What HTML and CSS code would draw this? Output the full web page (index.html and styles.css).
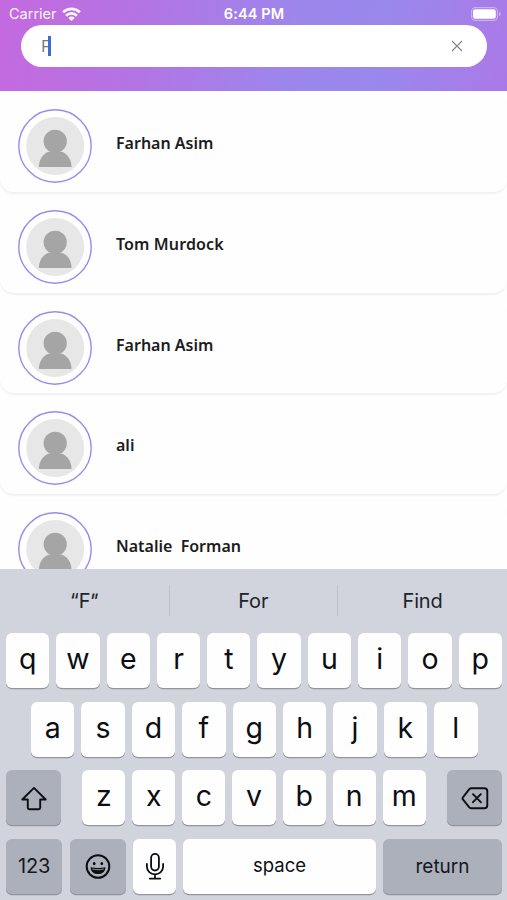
FILE: index.html
```html
<!DOCTYPE html>
<html lang="en">
<head>
<meta charset="utf-8">
<title>Search</title>
<link rel="stylesheet" href="styles.css">
</head>
<body>
<svg width="0" height="0" class="defs">
  <symbol id="person" viewBox="0 0 74 74">
    <circle cx="37" cy="37" r="36.200" fill="none" stroke="#998bed" stroke-width="1.400"/>
    <circle cx="37.200" cy="37" r="29" fill="#e7e7e7"/>
    <g fill="#a5a5a5"><circle cx="37.200" cy="32.300" r="11.600"/><path d="M20.900 58c0-7 3.500-13 9.500-15.300h13.600c6 2.300 9.500 8.300 9.500 15.300z"/></g>
  </symbol>
</svg>
<header class="header">
  <div class="status">
    <div class="carrier">Carrier
      <svg width="19" height="14" viewBox="0 0 19 14" fill="none" stroke="#fff" stroke-width="2.700"><path d="M1.100 5.300a12 12 0 0 1 16.800 0M4.100 8.700a7.600 7.600 0 0 1 10.800 0"/><path d="M9.500 14L6.300 10.900a4.500 4.500 0 0 1 6.400 0z" fill="#fff" stroke="none"/></svg>
    </div>
    <div class="time">6:44 PM</div>
    <svg class="battery" width="31" height="14" viewBox="0 0 31 14"><rect x=".6" y=".6" width="25.800" height="12.800" rx="3.800" fill="none" stroke="#fff" stroke-opacity=".4" stroke-width="1.100"/><rect x="2" y="2.200" width="22.800" height="9.600" rx="2.200" fill="#fff"/><path d="M28 4.800v4.400q1.600-.7 1.600-2.200t-1.600-2.200z" fill="#fff" fill-opacity=".45"/></svg>
  </div>
  <div class="search">
    <span class="query">F</span><span class="caret"></span>
    <svg class="clear" width="12" height="12" viewBox="0 0 12 12" stroke="#858585" stroke-width="1.100"><path d="M1 1l10 10M11 1L1 11"/></svg>
  </div>
</header>
<main class="list">
  <div class="card"><svg width="74" height="74"><use href="#person"/></svg><div class="name">Farhan Asim</div></div>
  <div class="card"><svg width="74" height="74"><use href="#person"/></svg><div class="name wide">Tom Murdock</div></div>
  <div class="card"><svg width="74" height="74"><use href="#person"/></svg><div class="name">Farhan Asim</div></div>
  <div class="card"><svg width="74" height="74"><use href="#person"/></svg><div class="name">ali</div></div>
  <div class="card"><svg width="74" height="74"><use href="#person"/></svg><div class="name">Natalie&nbsp; Forman</div></div>
</main>
<section class="keyboard">
  <div class="suggestions"><div>“F<span class="close-quote">"</span></div><div>For</div><div>Find</div></div>
  <div class="row"><b>q</b><b>w</b><b>e</b><b>r</b><b>t</b><b>y</b><b>u</b><b>i</b><b>o</b><b>p</b></div>
  <div class="row middle"><b>a</b><b>s</b><b>d</b><b>f</b><b>g</b><b>h</b><b>j</b><b>k</b><b>l</b></div>
  <div class="row lower">
    <div class="key dark"><svg width="28" height="26" viewBox="0 0 28 26" fill="none" stroke="#0c0e12" stroke-width="1.900" stroke-linejoin="round"><path d="M14 2.900L2.300 14.500h5.500v8.200q0 1.500 1.500 1.500h9.400q1.500 0 1.500-1.500v-8.200h5.500z"/></svg></div>
    <div class="letters"><b>z</b><b>x</b><b>c</b><b>v</b><b>b</b><b>n</b><b>m</b></div>
    <div class="key dark"><svg width="28" height="24" viewBox="0 0 28 24" fill="none" stroke="#0c0e12" stroke-width="1.900" stroke-linejoin="round" stroke-linecap="round"><path d="M10.500 2.300h12.800q3 0 3 3v14q0 3-3 3H10.500q-1.300 0-2.200-.9L2.100 13.700q-1.100-1.300 0-2.600L8.300 3.200q.9-.9 2.200-.9zM12 8.200l7.800 8M19.800 8.200l-7.800 8"/></svg></div>
  </div>
  <div class="row bottom">
    <div class="key dark numbers">123</div>
    <div class="key dark emoji"><svg width="26" height="26" viewBox="0 0 26 26"><circle cx="13" cy="13.500" r="11.300" fill="none" stroke="#0c0e12" stroke-width="2"/><ellipse cx="9.200" cy="10.600" rx="1.300" ry="1.700"/><ellipse cx="16.800" cy="10.600" rx="1.300" ry="1.700"/><path d="M5.500 14.200q7.500 1.400 15 0-.3 6.800-7.500 6.800t-7.500-6.800z" fill="#0c0e12"/><path d="M7 15.500q6 1 12 0l-.5 1.300q-5.500.9-11 0z" fill="#777c86"/></svg></div>
    <div class="key mic"><svg width="20" height="28" viewBox="0 0 20 28" fill="none" stroke="#0c0e12" stroke-width="1.800" stroke-linecap="round"><rect x="6.100" y="1.900" width="7.800" height="16.600" rx="3.900"/><path d="M1.900 12v2.800a8.100 7.600 0 0 0 16.200 0V12M10 22.500v4M4.800 26.600h10.400"/></svg></div>
    <div class="key space">space</div>
    <div class="key dark return">return</div>
  </div>
</section>
</body>
</html>
```

FILE: styles.css
```css
* { box-sizing: border-box; }
body {
  margin: 0;
  width: 507px;
  height: 900px;
  overflow: hidden;
  display: flex;
  flex-direction: column;
  background: #fefefe;
  font-family: Inter, "Liberation Sans", sans-serif;
  color: #0c0e12;
}
svg { display: block; flex: none; }
.defs { position: absolute; }
.header {
  flex: none;
  height: 91px;
  background: linear-gradient(100deg, #c569df 0%, #b573e3 25%, #9c86ec 58%, #9a88ed 74%, #aa79e8 100%);
}
.status {
  height: 25px;
  padding: 2px 5px 0 9px;
  display: grid;
  grid-template-columns: 1fr auto 1fr;
  align-items: center;
  color: #fff;
  font-size: 15px;
}
.carrier { display: flex; align-items: center; gap: 5px; opacity: .94; font-size: 14.500px; }
.time { padding-right: 3px; font-weight: 600; font-size: 14.500px; letter-spacing: .1px; }
.battery { justify-self: end; }
.search {
  height: 42px;
  margin: 0 20px 0 21px;
  padding: 0 24px 0 20px;
  border-radius: 21px;
  background: #fff;
  display: flex;
  align-items: center;
}
.query { width: 7px; font: 16px "Noto Sans", sans-serif; color: #777; }
.caret { width: 3px; height: 20px; background: #416bd4; }
.clear { margin-left: auto; }
.list { flex: none; height: 478px; overflow: hidden; }
.card {
  height: 92.750px;
  margin-top: 8px;
  padding: 10px 18px 0;
  display: flex;
  gap: 24px;
  border-radius: 14px;
  box-shadow: 0 2px 2px #f1f1f1;
}
.card:first-child { height: 100.750px; margin: 0; padding-top: 18px; }
.name { padding-top: 22px; font: 600 16px/24px "Noto Sans", sans-serif; color: #1c1c1c; }
.name.wide { letter-spacing: .12px; }
.keyboard { flex: 1; padding: 0 5px 0 6px; background: #d1d4dc; }
.suggestions {
  height: 64px;
  margin: 0 -5px 0 -6px;
  display: grid;
  grid-template-columns: 168.500px 168.500px 1fr;
  padding-top: 16px;
  font-size: 20px;
  line-height: 32px;
  letter-spacing: -.2px;
  text-align: center;
  color: #20242a;
}
.suggestions > div { height: 31px; }
.suggestions > div + div { border-left: 1px solid #bcbfc6; }
.close-quote { display: inline-block; transform: skewX(-12deg); margin-left: -1px; }
.row { display: flex; gap: 7px; height: 55px; margin-bottom: 13.500px; }
.row b, .key {
  display: flex;
  justify-content: center;
  border-radius: 6px;
  background: #fefefe;
  box-shadow: 0 1.300px 0 #92959b;
}
.row b { flex: 1; font-size: 28.500px; font-weight: 400; line-height: 52px; }
.middle { padding: 0 24.500px 0 25px; }
.lower { justify-content: space-between; }
.lower .key { width: 55px; }
.letters { display: flex; gap: 7px; width: 343.500px; }
.key { align-items: center; font-size: 20px; }
.key.dark { background: #abb0bb; color: #15181d; }
.bottom { margin-bottom: 0; }
.numbers, .emoji { width: 56px; }
.numbers { letter-spacing: -.2px; }
.emoji { margin-left: 1px; }
.mic { width: 43px; }
.space { width: 193px; padding-bottom: 3px; font-size: 18.500px; }
.return { flex: 1; font-size: 19px; }
```
